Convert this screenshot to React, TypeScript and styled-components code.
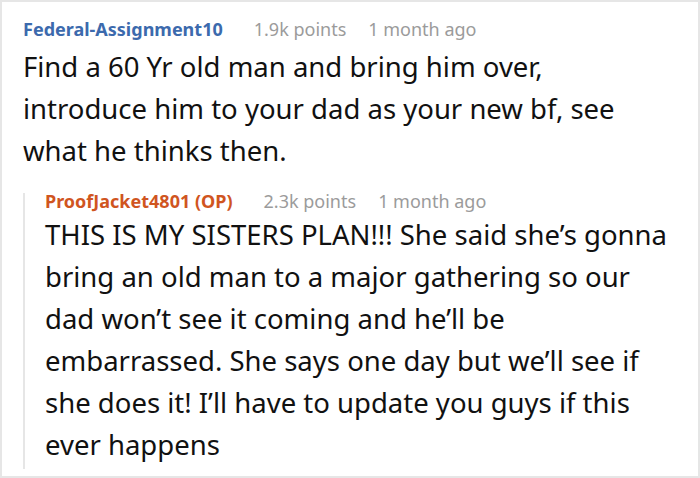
import * as React from "react";
import styled, { createGlobalStyle } from "styled-components";

const GlobalStyle = createGlobalStyle`
  html, body {
    margin: 0;
    padding: 0;
    background: #fff;
  }
  body {
    font-family: "Noto Sans", "Open Sans", sans-serif;
  }
`;

export default function App() {
  return (
    <>
      <GlobalStyle />
      <Frame>
        <Comment>
          <Meta>
            <Author>Federal-Assignment10</Author>
            <Stat>1.9k points</Stat>
            <Stat>1 month ago</Stat>
          </Meta>
          <Body>
            Find a 60 Yr old man and bring him over, introduce him to your dad
            as your new bf, see what he thinks then.
          </Body>
        </Comment>
        <Reply>
          <Meta $tight>
            <Author $op>ProofJacket4801 (OP)</Author>
            <Stat>2.3k points</Stat>
            <Stat>1 month ago</Stat>
          </Meta>
          <Body>
            THIS IS MY SISTERS PLAN!!! She said she’s gonna bring an old man to
            a major gathering so our dad won’t see it coming and he’ll be
            embarrassed. She says one day but we’ll see if she does it! I’ll
            have to update you guys if this ever happens
          </Body>
        </Reply>
      </Frame>
    </>
  );
}

const Frame = styled.div`
  box-sizing: border-box;
  width: 700px;
  height: 478px;
  border: 2px solid #e6e6e6;
  padding: 15px 0 0 21px;
  display: flex;
  flex-direction: column;
  gap: 21px;
`;

const Comment = styled.div`
  display: flex;
  flex-direction: column;
  gap: 5px;
`;

const Reply = styled.div`
  display: flex;
  flex-direction: column;
  gap: 5px;
  border-left: 2px solid #e6e6e6;
  padding: 0 0 3px 20px;
  margin-right: 10px;
`;

const Meta = styled.div<{ $tight?: boolean }>`
  display: flex;
  align-items: baseline;
  gap: 22px;
  font-size: 18px;
  line-height: ${(p) => (p.$tight ? "16px" : "24px")};
`;

const Author = styled.span<{ $op?: boolean }>`
  font-weight: 700;
  color: ${(p) => (p.$op ? "#d0551f" : "#3c6aad")};
  margin-right: 9px;
`;

const Stat = styled.span`
  color: #9b9b9b;
`;

const Body = styled.p`
  margin: 0;
  font-size: 27.5px;
  line-height: 42px;
  color: #111;
  max-width: 640px;
`;
